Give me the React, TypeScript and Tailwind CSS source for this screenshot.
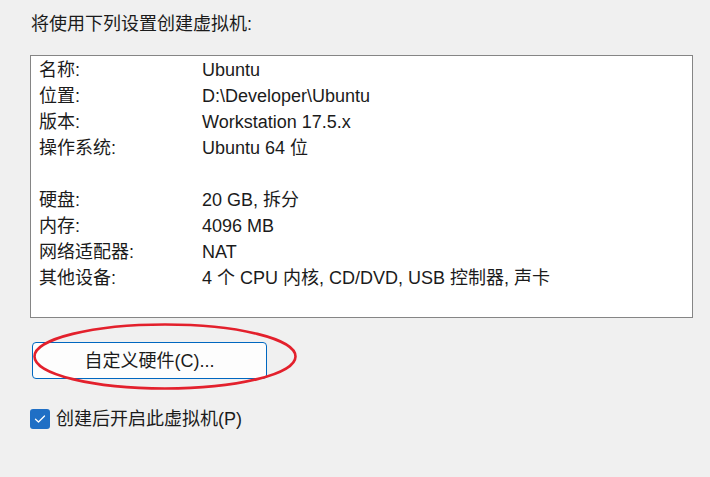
const rows: [string, string][] = [
  ['名称:', 'Ubuntu'],
  ['位置:', 'D:\\Developer\\Ubuntu'],
  ['版本:', 'Workstation 17.5.x'],
  ['操作系统:', 'Ubuntu 64 位'],
  ['', ''],
  ['硬盘:', '20 GB, 拆分'],
  ['内存:', '4096 MB'],
  ['网络适配器:', 'NAT'],
  ['其他设备:', '4 个 CPU 内核, CD/DVD, USB 控制器, 声卡'],
];

export default function App() {
  return (
    <div
      className="relative w-[710px] h-[477px] overflow-hidden bg-[#f0f0f0] text-[18px] leading-[26px] text-[#1b1b1b]"
      style={{ fontFamily: '"Liberation Sans", "Noto Sans CJK SC", sans-serif' }}
    >
      {/* Heading */}
      <div className="pl-[31px] pt-[11px]">将使用下列设置创建虚拟机:</div>

      {/* Summary box */}
      <div className="ml-[30px] mt-[18px] w-[663px] h-[263px] border border-[#858585] bg-white pl-[8px] pt-[1px]">
        {rows.map(([label, value], i) => (
          <div key={i} className="grid grid-cols-[163px_1fr] h-[26px] whitespace-nowrap">
            <span>{label}</span>
            <span>{value}</span>
          </div>
        ))}
      </div>

      {/* Customize hardware button */}
      <button className="ml-[32px] mt-[24px] flex w-[235px] h-[37px] items-center justify-center rounded-[4px] border border-[#0067c0] bg-[#fdfdfd] text-[#1b1b1b]">
        自定义硬件(C)...
      </button>

      {/* Power on checkbox */}
      <label className="ml-[30px] mt-[27px] flex items-center gap-[6px]">
        <span className="flex h-[20px] w-[20px] items-center justify-center rounded-[3px] bg-[#1f6fc5]">
          <svg width="12" height="10" viewBox="0 0 12 10" fill="none">
            <path d="M1.5 5.2 L4.5 8 L10.5 2" stroke="white" strokeWidth="1.3" strokeLinecap="round" strokeLinejoin="round" />
          </svg>
        </span>
        <span>创建后开启此虚拟机(P)</span>
      </label>

      {/* Red annotation ellipse */}
      <svg className="pointer-events-none absolute left-0 top-0" width="710" height="477">
        <ellipse cx="165" cy="356.5" rx="130.5" ry="32" fill="none" stroke="#e3202c" strokeWidth="2.6" />
      </svg>
    </div>
  );
}
